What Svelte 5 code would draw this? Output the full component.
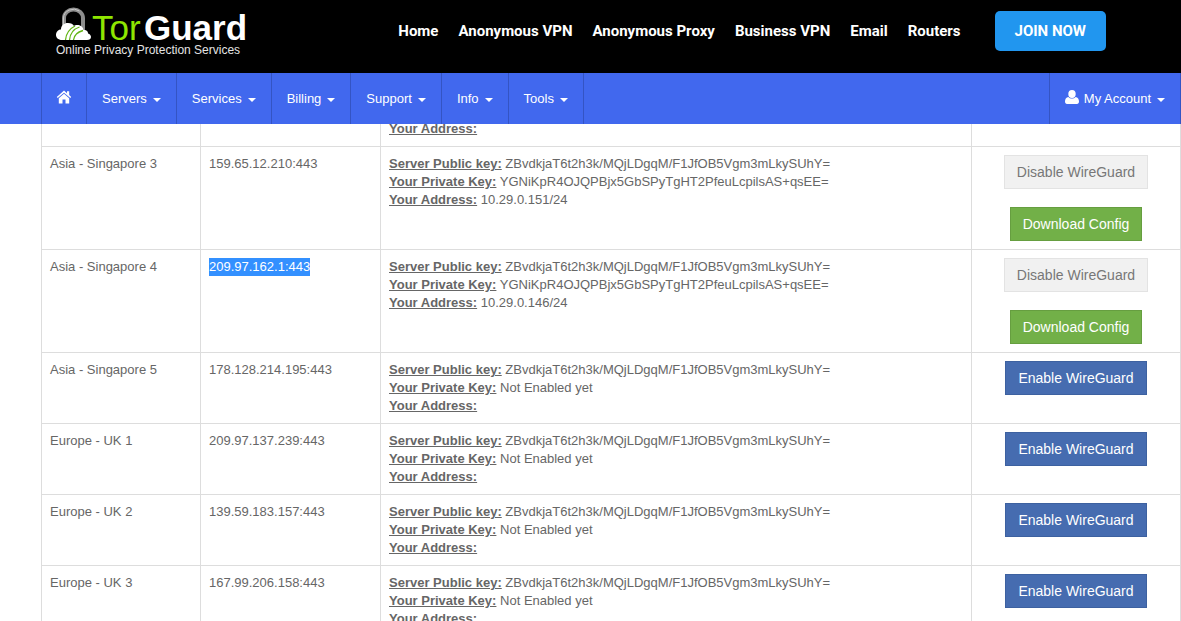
<script lang="ts">
  const mainLinks = ['Home', 'Anonymous VPN', 'Anonymous Proxy', 'Business VPN', 'Email', 'Routers'];
  const menus = ['Servers', 'Services', 'Billing', 'Support', 'Info', 'Tools'];

  const publicKey = 'ZBvdkjaT6t2h3k/MQjLDgqM/F1JfOB5Vgm3mLkySUhY=';
  const privateKey = 'YGNiKpR4OJQPBjx5GbSPyTgHT2PfeuLcpilsAS+qsEE=';

  const servers = [
    { name: 'Asia - Singapore 3', ip: '159.65.12.210:443', enabled: true, address: '10.29.0.151/24' },
    { name: 'Asia - Singapore 4', ip: '209.97.162.1:443', enabled: true, address: '10.29.0.146/24', selected: true },
    { name: 'Asia - Singapore 5', ip: '178.128.214.195:443', enabled: false, address: '' },
    { name: 'Europe - UK 1', ip: '209.97.137.239:443', enabled: false, address: '' },
    { name: 'Europe - UK 2', ip: '139.59.183.157:443', enabled: false, address: '' },
    { name: 'Europe - UK 3', ip: '167.99.206.158:443', enabled: false, address: '' },
  ];
</script>

<div class="page">
  <div class="top">
    <header>
      <a class="logo" href="#home" aria-label="TorGuard">
        <svg width="194" height="56" viewBox="0 0 194 56">
          <path d="M8 26V14a9.500 8.500 0 0 1 19 0v14" fill="none" stroke="#8d8d8d" stroke-width="4" />
          <path d="M7.500 22V14a10 9 0 0 1 16-7" fill="none" stroke="#c8c8c8" stroke-width="1" />
          <path
            d="M6 36C2 36 0 33.500 0 31c0-3 2-5.500 5-5.500 0-4 3-6.500 7-6.500 3 0 5 1 6 3 2-2 9-1.500 9.500 4 4 0 4.500 2 4.500 3.500 2 .5 3 2 3 3.500 0 2-1.500 3-4 3z"
            fill="#fff"
          />
          <path
            d="M9.500 36c.5-6 3.500-11 9.500-14M13.500 36c.5-6 4-11 10-13M17.500 36c.5-4 4-8 9.500-9.500"
            fill="none"
            stroke="#62b515"
            stroke-width="1.300"
          />
          <text class="tor" x="36" y="36">Tor</text>
          <text class="guard" x="88" y="36">Guard</text>
          <text class="tagline" x="0" y="50">Online Privacy Protection Services</text>
        </svg>
      </a>
      <nav class="main-links">
        {#each mainLinks as link}
          <a href="#{link}">{link}</a>
        {/each}
        <a class="join" href="#join">JOIN NOW</a>
      </nav>
    </header>

    <nav class="menu-bar">
      <a class="item first" href="#dashboard" aria-label="Dashboard">
        <svg class="icon" width="14" height="14" viewBox="0 0 14 14" fill="#fff">
          <path d="M7 0.5 10 3.2V1.2h2.200v3.900l2 1.800-.9 1.200L7 2.800.7 8.100-.2 6.900z" />
          <path d="M7 3.800 12.200 8.200V13.500H8.500V9.500h-3v4H1.800V8.200z" />
        </svg>
      </a>
      {#each menus as menu}
        <button class="item">{menu}<span class="caret"></span></button>
      {/each}
      <button class="item account">
        <svg class="icon" width="14" height="14" viewBox="0 0 14 14" fill="#fff">
          <ellipse cx="7" cy="4" rx="3.700" ry="4" />
          <path d="M3.500 7C1 7.200 0 9 0 11.800 0 13 .8 14 2 14h10c1.200 0 2-1 2-2.200 0-2.800-1-4.600-3.500-4.800C9 9 5 9 3.500 7z" />
        </svg>
        <span class="label">My Account</span><span class="caret"></span>
      </button>
    </nav>
  </div>

  <main>
    <table>
      <colgroup>
        <col class="col-name" />
        <col class="col-ip" />
        <col />
        <col class="col-actions" />
      </colgroup>
      <tbody>
        <tr>
          <td></td>
          <td></td>
          <td><b>Your Address:</b></td>
          <td></td>
        </tr>
        {#each servers as server}
          <tr>
            <td>{server.name}</td>
            <td><span class:selected={server.selected}>{server.ip}</span></td>
            <td>
              <div><b>Server Public key:</b> {publicKey}</div>
              <div><b>Your Private Key:</b> {server.enabled ? privateKey : 'Not Enabled yet'}</div>
              <div><b>Your Address:</b> {server.address}</div>
            </td>
            <td>
              <div class="actions">
                {#if server.enabled}
                  <button class="btn disable">Disable WireGuard</button>
                  <button class="btn download">Download Config</button>
                {:else}
                  <button class="btn enable">Enable WireGuard</button>
                {/if}
              </div>
            </td>
          </tr>
        {/each}
      </tbody>
    </table>
  </main>
</div>

<style>
  :global(body) {
    margin: 0;
    background: #fff;
  }

  .page {
    height: 100vh;
    overflow: hidden;
    font: 13px/18px "Liberation Sans", Arial, sans-serif;
    color: #666;
  }

  a {
    color: #fff;
    text-decoration: none;
  }

  button {
    font-family: inherit;
    cursor: pointer;
  }

  .top {
    position: fixed;
    top: 0;
    left: 0;
    right: 0;
    z-index: 10;
  }

  header {
    display: flex;
    justify-content: space-between;
    align-items: flex-start;
    box-sizing: border-box;
    height: 73px;
    padding: 0 75px 0 56px;
    background: #000;
  }

  .logo {
    display: block;
    padding-top: 4px;
  }

  .logo svg {
    display: block;
    overflow: visible;
  }

  .tor {
    font: 400 35px "Liberation Sans", Arial, sans-serif;
    fill: #8fe600;
  }

  .guard {
    font: 700 35px "Liberation Sans", Arial, sans-serif;
    fill: #fff;
  }

  .tagline {
    font: 12px "Liberation Sans", Arial, sans-serif;
    fill: #e4e4e4;
  }

  .main-links {
    display: flex;
    align-items: center;
    gap: 20px;
    padding-top: 11px;
    font: 700 15px/20px Roboto, sans-serif;
  }

  .join {
    margin-left: 14px;
    padding: 10px 20px;
    border-radius: 5px;
    background: #2196ef;
  }

  .menu-bar {
    display: flex;
    height: 51px;
    padding-left: 41px;
    background: #4168ee;
  }

  .item {
    display: flex;
    align-items: center;
    padding: 0 15px;
    border: 0;
    border-right: 1px solid #3454c4;
    background: none;
    color: #fff;
    font-size: 13px;
    line-height: 18px;
  }

  .item.first {
    border-left: 1px solid #3454c4;
  }

  .account {
    margin-left: auto;
    border-left: 1px solid #3454c4;
  }

  .icon {
    margin-bottom: 3px;
    overflow: visible;
  }

  .label {
    margin-left: 5px;
  }

  .caret {
    margin: 3px 0 0 6px;
    border-top: 4px solid #fff;
    border-left: 4px solid transparent;
    border-right: 4px solid transparent;
  }

  main {
    padding: 111px 0 0 41px;
  }

  table {
    width: 100%;
    table-layout: fixed;
    border-collapse: collapse;
  }

  .col-name {
    width: 159px;
  }

  .col-ip {
    width: 180px;
  }

  .col-actions {
    width: 209px;
  }

  td {
    padding: 8px;
    border: 1px solid #ddd;
    vertical-align: top;
  }

  b {
    text-decoration: underline;
  }

  .selected {
    display: inline-block;
    background: #3390ff;
    color: #fff;
  }

  .actions {
    display: flex;
    flex-direction: column;
    align-items: center;
    gap: 18px;
  }

  .btn {
    padding: 7px 12px;
    border: 1px solid;
    font-size: 14px;
    line-height: 18px;
    color: #fff;
  }

  .disable {
    background: #f1f1f1;
    border-color: #e3e3e3;
    color: #777;
  }

  .download {
    background: #72b048;
    border-color: #669e40;
  }

  .enable {
    background: #466cb0;
    border-color: #3d61a0;
  }
</style>
